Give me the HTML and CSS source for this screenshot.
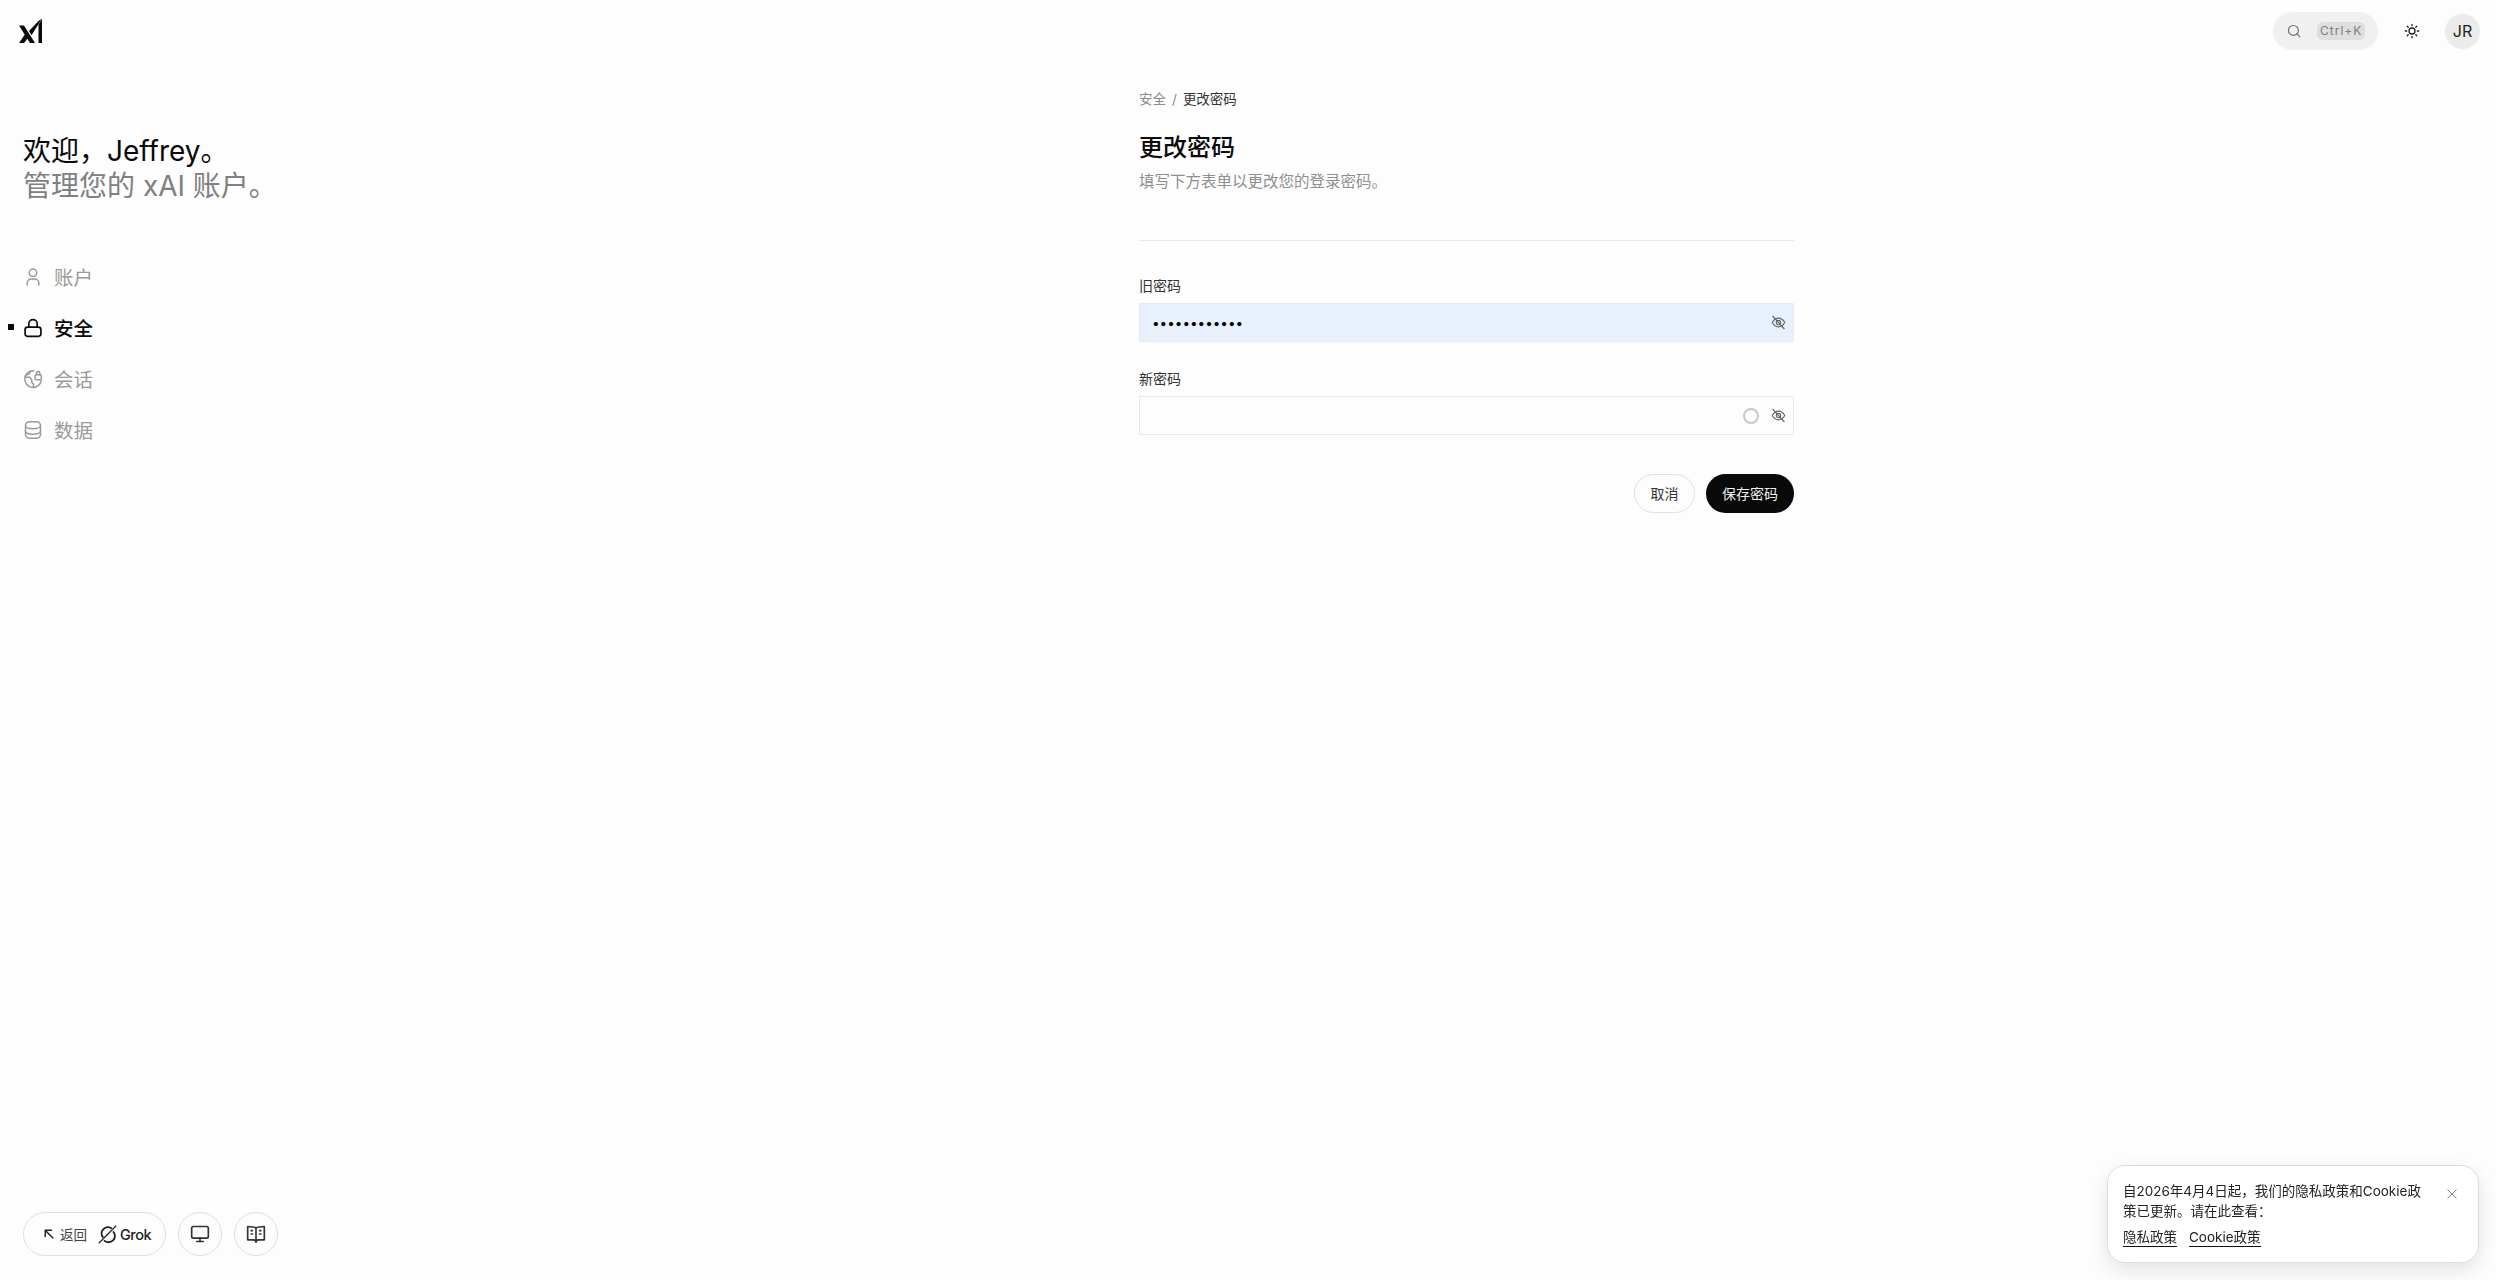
FILE: index.html
```html
<!DOCTYPE html>
<html>

<head>
    <title>更改密码</title>
    <link rel="stylesheet" href="styles.css">
</head>

<body>
    <header class="topbar">
        <svg class="logo" viewBox="0 0 24 26" fill="#0a0a0a">
            <polygon points="0,7.500 5,7.500 16,25 11,25" />
            <polygon points="0,25 5,25 8.800,20.200 6.200,16" />
            <polygon points="10,13 12.500,17.200 23,0.500 19.500,3" />
            <polygon points="19.500,6.500 23,1 23,25 19.500,25" />
        </svg>
        <div class="topbar-right">
            <div class="search">
                <svg class="search-icon" viewBox="0 0 24 24" fill="none" stroke="#6f6f6f" stroke-width="2" stroke-linecap="round">
                    <circle cx="11" cy="11" r="8.500" />
                    <path d="M22 22l-5-5" />
                </svg>
                <span class="kbd">Ctrl+K</span>
            </div>
            <svg class="icon-16 sun" viewBox="0 0 24 24" fill="none" stroke="#222" stroke-width="2" stroke-linecap="round">
                <circle cx="12" cy="12" r="4.500" />
                <path d="M12 2v2M12 20v2M4.900 4.900l1.400 1.400M17.700 17.700l1.400 1.400M2 12h2M20 12h2M4.900 19.100l1.400-1.400M17.700 6.300l1.400-1.400" />
            </svg>
            <div class="avatar">JR</div>
        </div>
    </header>

    <div class="layout">
        <aside class="sidebar">
            <div>
                <h1 class="welcome">欢迎，Jeffrey。<br><span>管理您的 xAI 账户。</span></h1>
                <nav class="nav">
                    <a class="nav-item">
                        <svg class="icon-20" viewBox="0 0 24 24" fill="none" stroke="currentColor" stroke-width="1.800" stroke-linecap="round">
                            <circle cx="12" cy="7" r="4.500" />
                            <path d="M5 21.500v-2a5 5 0 0 1 5-5h4a5 5 0 0 1 5 5v2" />
                        </svg>
                        账户
                    </a>
                    <a class="nav-item active">
                        <svg class="icon-20" viewBox="0 0 24 24" fill="none" stroke="currentColor" stroke-width="2" stroke-linecap="round">
                            <rect x="2.500" y="11" width="19" height="11" rx="3" />
                            <path d="M7 11V7a5 5 0 0 1 10 0v4" />
                        </svg>
                        安全
                    </a>
                    <a class="nav-item">
                        <svg class="icon-20" viewBox="0 0 24 24" fill="none" stroke="currentColor" stroke-width="1.800" stroke-linecap="round">
                            <path d="M13 2.200A10 10 0 1 0 22 14" />
                            <path d="M2.500 10H8l2.500 3v3l2 2v4M9 2.500 7.500 6l-3 1" />
                            <rect x="14.500" y="7" width="7.500" height="6" rx="1.500" />
                            <path d="M16.200 7V5a2 2 0 0 1 4 0v2" />
                        </svg>
                        会话
                    </a>
                    <a class="nav-item">
                        <svg class="icon-20" viewBox="0 0 24 24" fill="none" stroke="currentColor" stroke-width="1.800">
                            <rect x="3" y="2" width="18" height="20" rx="5" />
                            <path d="M3 7c0 2 4 3.500 9 3.500s9-1.500 9-3.500" />
                            <path d="M3 13.500c0 2 4 3.500 9 3.500s9-1.500 9-3.500" />
                        </svg>
                        数据
                    </a>
                </nav>
            </div>
            <div class="bottom-tools">
                <div class="pill">
                    <svg class="icon-10" viewBox="0 0 24 24" fill="none" stroke="#222" stroke-width="3.500">
                        <path d="M22 22 4 4M3 19V3h16" />
                    </svg>
                    <span class="back">返回</span>
                    <svg class="grok-icon" viewBox="0 0 24 24" fill="none" stroke="#222" stroke-width="2.400">
                        <path d="M17.500 4.500A8 8 0 0 0 6.500 16" />
                        <path d="M7.500 19.500A8 8 0 0 0 19 8" />
                        <path d="M1 23 23 1" stroke-width="1.500" />
                    </svg>
                    <span class="grok">Grok</span>
                </div>
                <div class="round-btn">
                    <svg class="icon-20" viewBox="0 0 24 24" fill="none" stroke="#333" stroke-width="2" stroke-linecap="round">
                        <rect x="2" y="3" width="20" height="14" rx="2" />
                        <path d="M12 17v4M8 21h8" />
                    </svg>
                </div>
                <div class="round-btn">
                    <svg class="icon-20" viewBox="0 0 24 24" fill="none" stroke="#333" stroke-width="2" stroke-linejoin="round">
                        <path d="M12 22V5C10 3.500 6 3 2 3v16h7c1.500 0 3 1 3 3c0-2 1.500-3 3-3h7V3c-4 0-8 .5-10 2" />
                        <path d="M5.500 8h3M5.500 12h3M15.500 8h3M15.500 12h3" />
                    </svg>
                </div>
            </div>
        </aside>

        <main class="content">
            <div class="crumbs"><span class="crumb-muted">安全</span><span class="crumb-muted">/</span><span>更改密码</span></div>
            <h2 class="title">更改密码</h2>
            <p class="subtitle">填写下方表单以更改您的登录密码。</p>
            <div class="divider"></div>

            <label class="label">旧密码</label>
            <div class="field filled">
                <span class="dots">••••••••••••</span>
                <svg class="eye" viewBox="0 0 24 24" fill="none" stroke="#666" stroke-width="1.800" stroke-linecap="round">
                    <path d="M2 12s4-7 10-7 10 7 10 7-4 7-10 7-10-7-10-7z" />
                    <circle cx="12" cy="12" r="3.500" />
                    <path d="M3 2l18 20" />
                </svg>
            </div>

            <label class="label second">新密码</label>
            <div class="field">
                <span class="ring"></span>
                <svg class="eye" viewBox="0 0 24 24" fill="none" stroke="#666" stroke-width="1.800" stroke-linecap="round">
                    <path d="M2 12s4-7 10-7 10 7 10 7-4 7-10 7-10-7-10-7z" />
                    <circle cx="12" cy="12" r="3.500" />
                    <path d="M3 2l18 20" />
                </svg>
            </div>

            <div class="actions">
                <button class="btn btn-cancel">取消</button>
                <button class="btn btn-save">保存密码</button>
            </div>
        </main>
    </div>

    <div class="toast">
        <div class="toast-body">
            <p class="toast-text">自2026年4月4日起，我们的隐私政策和Cookie政策已更新。请在此查看：</p>
            <div class="toast-links"><a>隐私政策</a><a>Cookie政策</a></div>
        </div>
        <svg class="toast-close" viewBox="0 0 24 24" fill="none" stroke="#666" stroke-width="2" stroke-linecap="round">
            <path d="M2 2l20 20M22 2 2 22" />
        </svg>
    </div>
</body>

</html>
```

FILE: styles.css
```css
* {
    box-sizing: border-box;
}

html,
body {
    height: 100%;
}

body {
    margin: 0;
    display: flex;
    flex-direction: column;
    overflow: hidden;
    font-family: Inter, "Noto Sans CJK SC", sans-serif;
    color: #0a0a0a;
    background-color: #fdfdfd;
}

.icon-10 {
    width: 10px;
    height: 10px;
    flex-shrink: 0;
}

.icon-16 {
    width: 16px;
    height: 16px;
    flex-shrink: 0;
}

.icon-20 {
    width: 20px;
    height: 20px;
    flex-shrink: 0;
}

.topbar {
    height: 64px;
    flex-shrink: 0;
    display: flex;
    align-items: center;
    justify-content: space-between;
    padding: 0 16px 2px 19px;
}

.logo {
    width: 24px;
    height: 26px;
}

.topbar-right {
    display: flex;
    align-items: center;
}

.search {
    width: 105px;
    height: 38px;
    display: flex;
    align-items: center;
    gap: 16px;
    padding-left: 14px;
    background-color: #f0f0f0;
    border-radius: 19px;
}

.search-icon {
    width: 14px;
    height: 14px;
    flex-shrink: 0;
}

.kbd {
    padding: 2px 3px;
    font-size: 12px;
    line-height: 14px;
    letter-spacing: 1px;
    color: #7d7d7d;
    background-color: #dedede;
    border-radius: 6px;
}

.sun {
    margin: 0 25px 0 26px;
}

.avatar {
    width: 35px;
    height: 35px;
    display: flex;
    align-items: center;
    justify-content: center;
    font-size: 16px;
    color: #222;
    background-color: #ebebeb;
    border-radius: 50%;
}

.layout {
    flex: 1;
    display: flex;
    min-height: 0;
}

.sidebar {
    width: 1139px;
    flex-shrink: 0;
    display: flex;
    flex-direction: column;
    justify-content: space-between;
    padding: 70px 0 24px 23px;
}

.welcome {
    margin: 0;
    font-size: 28px;
    font-weight: 400;
    line-height: 35px;
}

.welcome span {
    color: #808080;
}

.nav {
    margin-top: 47px;
    display: flex;
    flex-direction: column;
}

.nav-item {
    position: relative;
    height: 51px;
    display: flex;
    align-items: center;
    gap: 11px;
    font-size: 19.500px;
    color: #9a9a9a;
}

.nav-item.active {
    color: #0a0a0a;
    font-weight: 500;
}

.nav-item.active::before {
    content: "";
    position: absolute;
    left: -15px;
    top: 22px;
    width: 6px;
    height: 6px;
    background-color: #0a0a0a;
}

.bottom-tools {
    display: flex;
    gap: 12px;
}

.pill {
    width: 143px;
    height: 44px;
    display: flex;
    align-items: center;
    padding-left: 20px;
    background-color: #fdfdfd;
    border: 1px solid #dfdfdf;
    border-radius: 22px;
}

.back {
    margin: 0 11px 0 6px;
    font-size: 13.500px;
    color: #444;
}

.grok-icon {
    width: 19px;
    height: 19px;
    flex-shrink: 0;
}

.grok {
    margin-left: 3px;
    font-size: 14.500px;
    font-weight: 500;
    letter-spacing: -0.500px;
    color: #222;
}

.round-btn {
    width: 44px;
    height: 44px;
    display: flex;
    align-items: center;
    justify-content: center;
    border: 1px solid #dfdfdf;
    border-radius: 50%;
}

.content {
    width: 655px;
    padding-top: 25px;
}

.crumbs {
    display: flex;
    gap: 6px;
    font-size: 13.500px;
    line-height: 20px;
    color: #333;
}

.crumb-muted {
    color: #8a8a8a;
}

.title {
    margin: 24px 0 0;
    font-size: 24px;
    font-weight: 500;
    line-height: 30px;
}

.subtitle {
    margin: 7px 0 0;
    font-size: 15.500px;
    line-height: 24px;
    color: #8f8f8f;
}

.divider {
    height: 1px;
    margin-top: 46px;
    background-color: #e8e8e8;
}

.label {
    display: block;
    margin-top: 35px;
    font-size: 14px;
    line-height: 20px;
    color: #333;
}

.label.second {
    margin-top: 27px;
}

.field {
    height: 39px;
    margin-top: 7px;
    display: flex;
    align-items: center;
    justify-content: flex-end;
    padding: 0 7px 0 12px;
    border: 1px solid #e8e8e8;
}

.field.filled {
    justify-content: space-between;
    background-color: #e8f0fb;
    border-color: #e4ecf7;
}

.dots {
    font-size: 13.500px;
    color: #0a0a0a;
}

.eye {
    width: 15px;
    height: 15px;
    flex-shrink: 0;
}

.ring {
    width: 16px;
    height: 16px;
    margin-right: 12px;
    border: 2.500px solid #c8c8c8;
    border-radius: 50%;
}

.actions {
    margin-top: 39px;
    display: flex;
    justify-content: flex-end;
    gap: 11px;
}

.btn {
    height: 39px;
    padding: 0 0 2px;
    font-family: inherit;
    font-size: 14px;
    border-radius: 20px;
    cursor: pointer;
}

.btn-cancel {
    width: 61px;
    color: #333;
    background-color: #fdfdfd;
    border: 1px solid #e0e0e0;
}

.btn-save {
    width: 88px;
    color: #f0f0f0;
    background-color: #0a0a0a;
    border: none;
}

.toast {
    position: fixed;
    left: 2107px;
    top: 1165px;
    width: 372px;
    height: 98px;
    display: flex;
    justify-content: space-between;
    padding: 15px 21px 0 15px;
    background-color: #fff;
    border: 1px solid #dcdcdc;
    border-radius: 18px;
    box-shadow: 0 8px 20px rgba(0, 0, 0, 0.1);
}

.toast-body {
    width: 305px;
}

.toast-text {
    margin: 0;
    font-size: 13.500px;
    line-height: 20px;
    color: #222;
}

.toast-links {
    margin-top: 7px;
    display: flex;
    gap: 12px;
    font-size: 13.500px;
    line-height: 18px;
}

.toast-links a {
    color: #222;
    border-bottom: 1px solid #111;
}

.toast-close {
    width: 10px;
    height: 10px;
    margin-top: 8px;
}
```
